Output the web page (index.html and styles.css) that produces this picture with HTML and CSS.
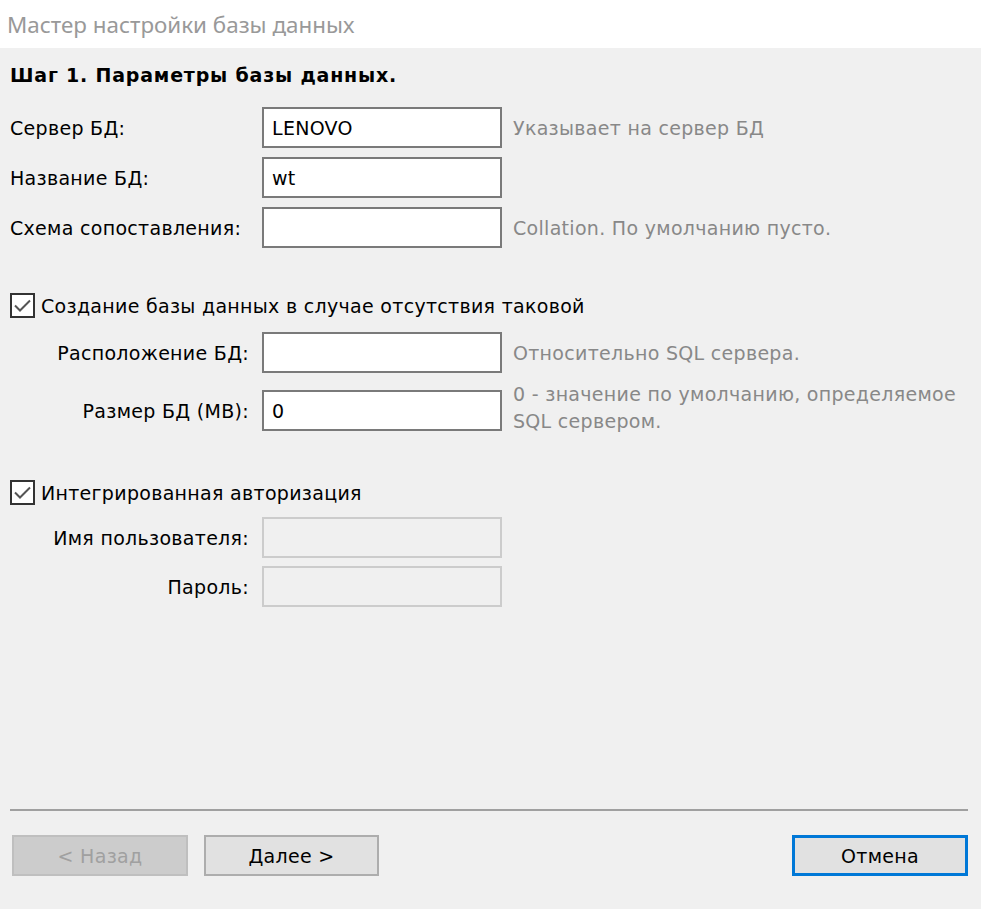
FILE: index.html
```html
<!DOCTYPE html>
<html lang="ru">
<head>
<meta charset="utf-8">
<title>Мастер настройки базы данных</title>
<link rel="stylesheet" href="styles.css">
</head>
<body>
<div class="window">
  <div class="titlebar">Мастер настройки базы данных</div>
  <div class="content">
    <div class="heading">Шаг 1. Параметры базы данных.</div>

    <div class="row r1">
      <div class="label">Сервер БД:</div>
      <div class="input">LENOVO</div>
      <div class="hint">Указывает на сервер БД</div>
    </div>
    <div class="row r2">
      <div class="label">Название БД:</div>
      <div class="input">wt</div>
      <div class="hint"></div>
    </div>
    <div class="row r3">
      <div class="label">Схема сопоставления:</div>
      <div class="input"></div>
      <div class="hint">Collation. По умолчанию пусто.</div>
    </div>

    <div class="check c1">
      <span class="box"><svg viewBox="0 0 21 21" width="21" height="21"><path d="M3 10.5 L8 15.5 L18 5.5" fill="none" stroke="#555" stroke-width="2"/></svg></span>
      <span class="check-text">Создание базы данных в случае отсутствия таковой</span>
    </div>

    <div class="row r4">
      <div class="label right">Расположение БД:</div>
      <div class="input"></div>
      <div class="hint">Относительно SQL сервера.</div>
    </div>
    <div class="row r5">
      <div class="label right">Размер БД (МВ):</div>
      <div class="input">0</div>
      <div class="hint two">0 - значение по умолчанию, определяемое<br>SQL сервером.</div>
    </div>

    <div class="check c2">
      <span class="box"><svg viewBox="0 0 21 21" width="21" height="21"><path d="M3 10.5 L8 15.5 L18 5.5" fill="none" stroke="#555" stroke-width="2"/></svg></span>
      <span class="check-text">Интегрированная авторизация</span>
    </div>

    <div class="row r6">
      <div class="label right">Имя пользователя:</div>
      <div class="input disabled"></div>
      <div class="hint"></div>
    </div>
    <div class="row r7">
      <div class="label right">Пароль:</div>
      <div class="input disabled"></div>
      <div class="hint"></div>
    </div>
  </div>

  <div class="footer">
    <div class="separator"></div>
    <div class="buttons">
      <div class="btn btn-disabled">&lt; Назад</div>
      <div class="btn btn-next">Далее &gt;</div>
      <div class="btn btn-cancel">Отмена</div>
    </div>
  </div>
</div>
</body>
</html>
```

FILE: styles.css
```css
html, body {
  margin: 0;
  padding: 0;
  background: #f0f0f0;
}

body {
  font-family: "DejaVu Sans", Verdana, sans-serif;
  font-size: 19px;
  letter-spacing: 0.3px;
  color: #000;
}

.window {
  display: flex;
  flex-direction: column;
  height: 909px;
  overflow: hidden;
}

.titlebar {
  height: 48px;
  background: #fff;
  color: #999;
  font-family: "Noto Sans", "Open Sans", sans-serif;
  font-size: 22.4px;
  letter-spacing: 0;
  display: flex;
  align-items: center;
  padding-left: 7px;
  flex-shrink: 0;
}

.content {
  padding-left: 10px;
  display: flex;
  flex-direction: column;
}

.heading {
  font-weight: bold;
  line-height: 22px;
  letter-spacing: 0.8px;
  margin-top: 16px;
  margin-bottom: 21px;
}

.row {
  display: grid;
  grid-template-columns: 252px 240px 1fr;
  align-items: center;
  height: 41px;
}

.r2, .r3 { margin-top: 9px; }
.r4 { margin-top: 14px; }
.r5 { margin-top: 13px; }
.r6 { margin-top: 12px; }
.r7 { margin-top: 8px; }

.label {
  white-space: nowrap;
}

.label.right {
  text-align: right;
  padding-right: 13px;
}

.input {
  box-sizing: border-box;
  height: 41px;
  border: 2px solid #7a7a7a;
  background: #fff;
  padding-left: 8px;
  display: flex;
  align-items: center;
}

.input.disabled {
  border-color: #cccccc;
  background: #f0f0f0;
}

.hint {
  color: #888;
  padding-left: 11px;
  white-space: nowrap;
}

.hint.two {
  line-height: 27px;
  align-self: start;
  margin-top: -5px;
}

.check {
  display: flex;
  align-items: center;
  height: 25px;
}

.c1 { margin-top: 45px; }
.c2 { margin-top: 53px; }

.box {
  box-sizing: border-box;
  width: 25px;
  height: 25px;
  border: 2px solid #333;
  background: #fff;
  display: flex;
  align-items: center;
  justify-content: center;
}

.check-text {
  margin-left: 6px;
}

.footer {
  margin-top: auto;
  padding: 0 13px 33px 10px;
}

.separator {
  height: 2px;
  background: #a0a0a0;
}

.buttons {
  display: flex;
  margin-top: 24px;
  padding-left: 2px;
}

.btn {
  box-sizing: border-box;
  width: 176px;
  height: 41px;
  display: flex;
  align-items: center;
  justify-content: center;
  background: #e1e1e1;
  border: 2px solid #adadad;
}

.btn-disabled {
  background: #cccccc;
  border-color: #bfbfbf;
  color: #a0a0a0;
}

.btn-next {
  margin-left: 16px;
  width: 175px;
}

.btn-cancel {
  margin-left: auto;
  border: 3px solid #0078d7;
}
```
